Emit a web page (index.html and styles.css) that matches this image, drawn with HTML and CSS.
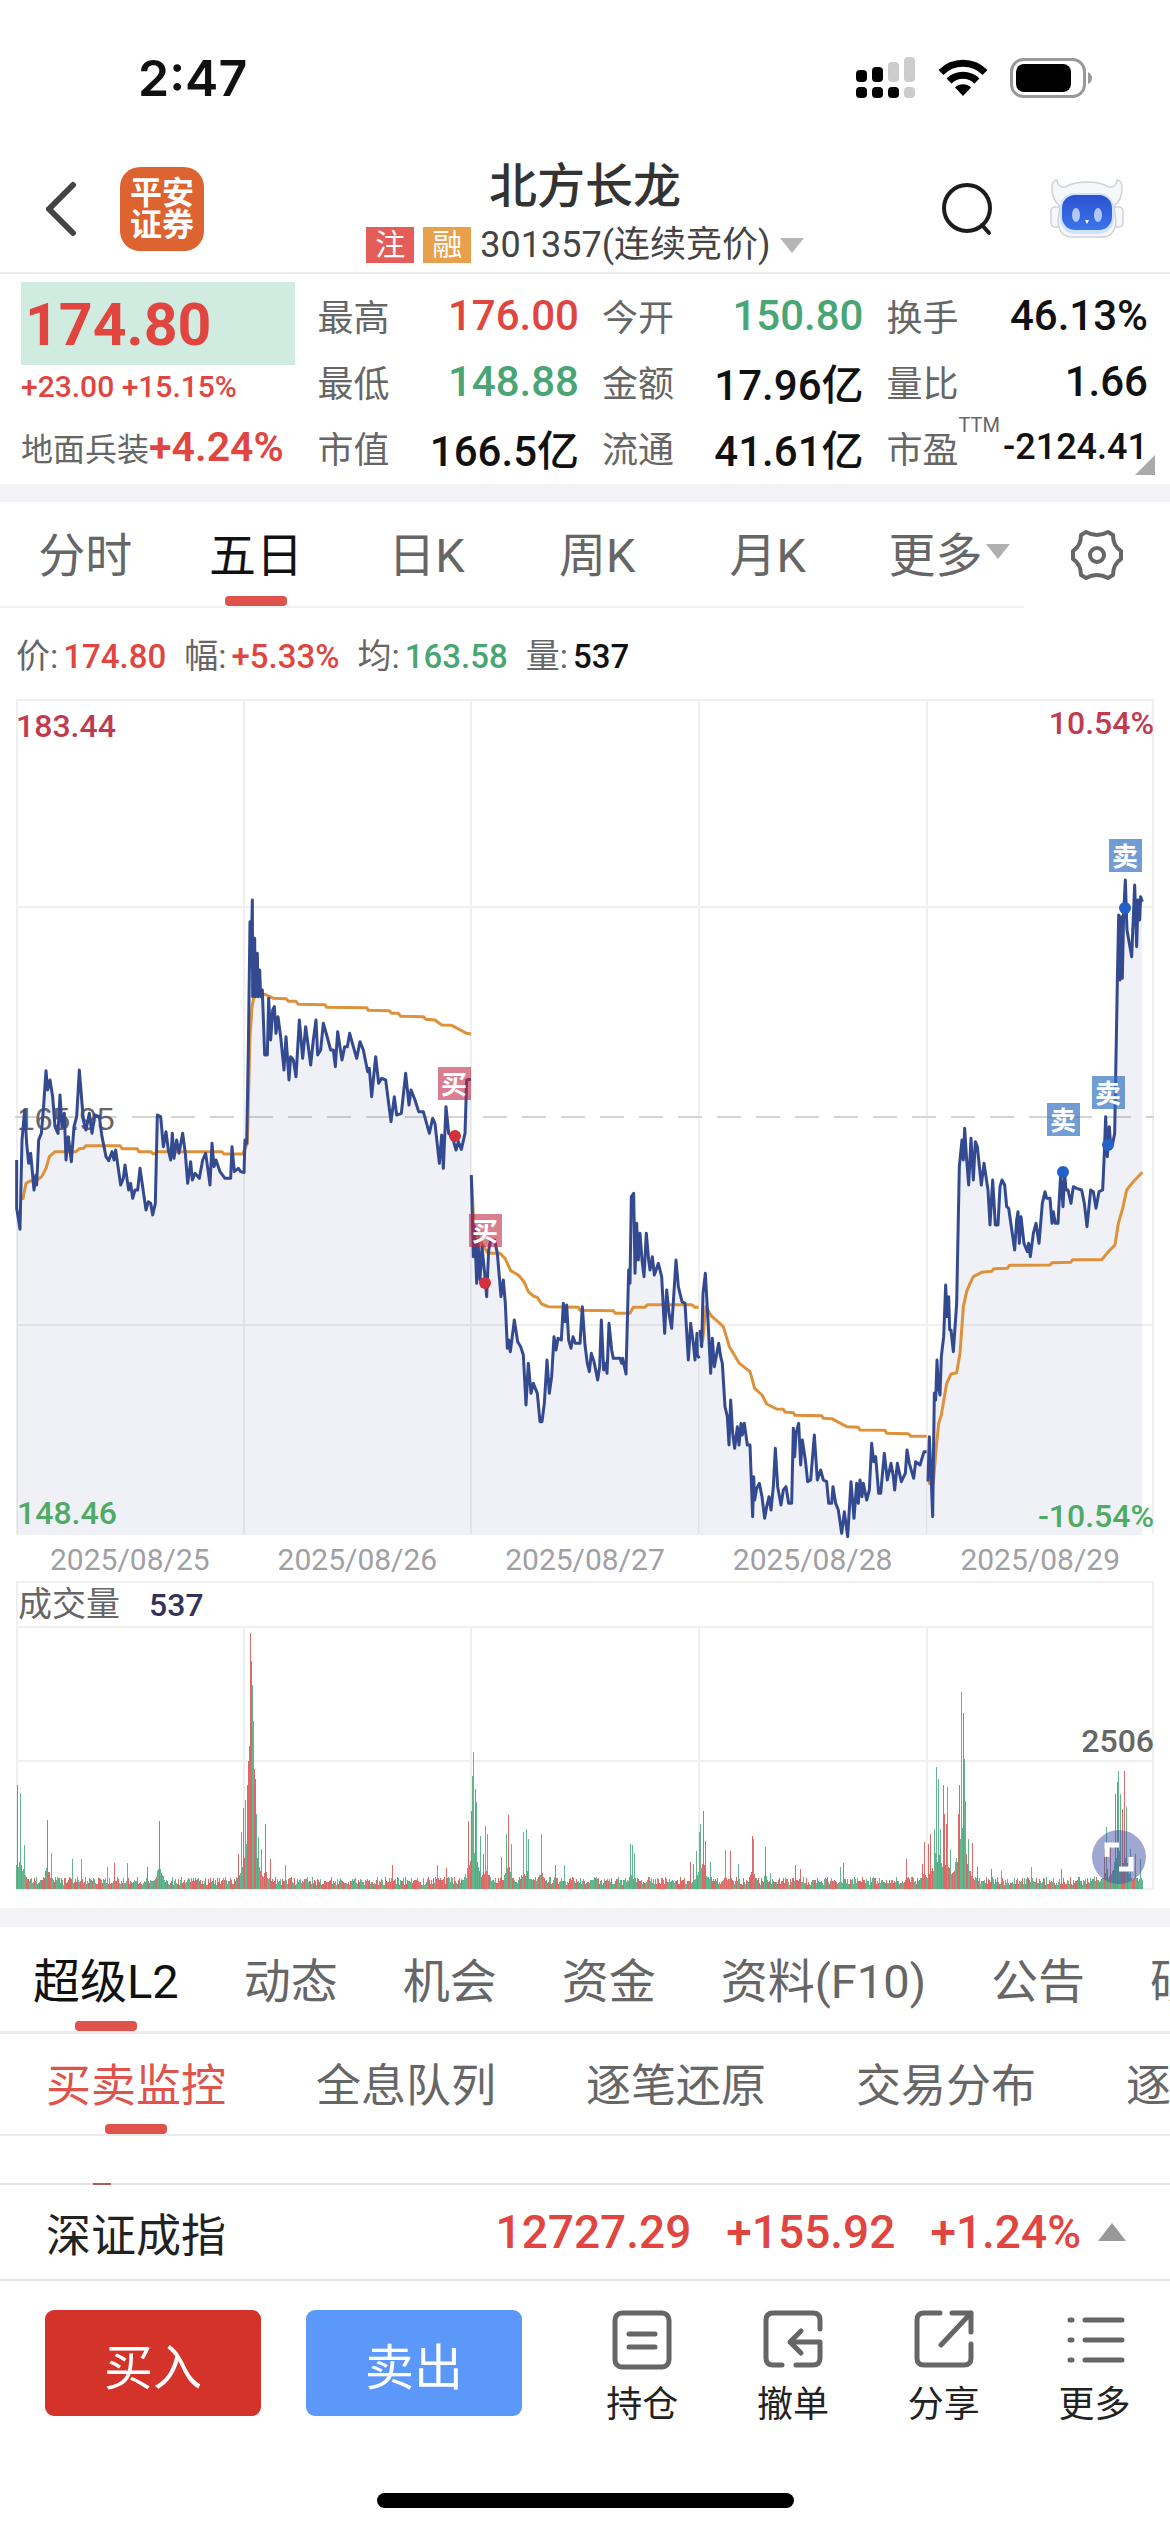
FILE: index.html
```html
<!DOCTYPE html>
<html lang="zh-CN">

<head>
  <meta charset="UTF-8">
  <meta name="viewport" content="width=device-width, initial-scale=1.0">
  <title>北方长龙 301357</title>
  <link rel="stylesheet" href="styles.css">
</head>

<body>
  <div class="status-bar">
    <span class="time">2:47</span>
    <div class="status-icons">
      <svg width="60" height="44" viewBox="0 0 60 44">
        <g fill="#000">
          <rect x="0" y="14" width="11" height="12" rx="4" />
          <rect x="16" y="11" width="11" height="15" rx="4" />
          <rect x="0" y="31" width="11" height="11" rx="4" />
          <rect x="16" y="31" width="11" height="11" rx="4" />
          <rect x="32" y="31" width="11" height="11" rx="4" />
        </g>
        <g fill="#ccc">
          <rect x="32" y="6" width="11" height="20" rx="4" />
          <rect x="48" y="1" width="11" height="25" rx="4" />
          <rect x="48" y="31" width="11" height="11" rx="4" />
        </g>
      </svg>
      <svg width="50" height="38" viewBox="0 0 50 38">
        <g fill="none" stroke="#000" stroke-width="7">
          <path d="M3 13.500 A31 31 0 0 1 47 13.500" />
          <path d="M11 22 A20 20 0 0 1 39 22" />
        </g>
        <path d="M17 28.500 A11.500 11.500 0 0 1 33 28.500 L25 37Z" fill="#000" />
      </svg>
      <svg width="82" height="40" viewBox="0 0 82 40">
        <rect x="1.500" y="1.500" width="73" height="37" rx="12" fill="none" stroke="#999" stroke-width="3" />
        <rect x="6" y="6" width="55" height="28" rx="8" fill="#000" />
        <path d="M78 14 Q82 16 82 20 Q82 24 78 26Z" fill="#999" />
      </svg>
    </div>
  </div>

  <header class="header">
    <div class="header-side">
      <button class="icon-button" aria-label="返回">
        <svg width="34" height="56" viewBox="0 0 34 56">
          <path d="M27 4 L3 28 L27 52" fill="none" stroke="#444" stroke-width="6" stroke-linecap="round" stroke-linejoin="round" />
        </svg>
      </button>
      <div class="logo">平安<br>证券</div>
    </div>
    <div class="title">
      <h1>北方长龙</h1>
      <div class="subtitle">
        <span class="tag">注</span>
        <span class="tag tag-orange">融</span>
        <span class="code">301357(连续竞价)</span>
        <svg width="24" height="15" viewBox="0 0 24 15"><path d="M0 0H24L12 15Z" fill="#b5b5b5" /></svg>
      </div>
    </div>
    <div class="header-side header-right">
      <button class="icon-button" aria-label="搜索">
        <svg width="54" height="56" viewBox="0 0 54 56">
          <circle cx="27" cy="27" r="23" fill="none" stroke="#1c1c1c" stroke-width="4" />
          <path d="M42 44 L49 52" stroke="#1c1c1c" stroke-width="4" stroke-linecap="round" />
        </svg>
      </button>
      <button class="icon-button" aria-label="智能助手">
        <svg width="74" height="60" viewBox="0 0 74 60">
          <defs>
            <linearGradient id="face" x1="0" y1="0" x2="0" y2="1">
              <stop offset="0" stop-color="#2b52cf" />
              <stop offset="1" stop-color="#3b74ec" />
            </linearGradient>
          </defs>
          <g fill="#f6f7f9" stroke="#cfd2d9" stroke-width="1.500">
            <rect x="1" y="28" width="12" height="20" rx="4" />
            <rect x="61" y="28" width="12" height="20" rx="4" />
            <path d="M10 27 Q1 20 2 7 Q3 1 7 1 Q8 9 15 8 Q24 3 37 3 Q50 3 59 8 Q66 9 67 1 Q71 1 72 7 Q73 20 64 27 L66 42 Q65 58 52 58 H22 Q9 58 8 42Z" />
          </g>
          <rect x="10" y="14" width="54" height="41" rx="15" fill="#cfe4fb" />
          <rect x="12" y="16" width="50" height="35" rx="13" fill="url(#face)" />
          <ellipse cx="26" cy="36" rx="4" ry="7" fill="#b0c9fa" />
          <ellipse cx="48" cy="36" rx="4" ry="7" fill="#b0c9fa" />
          <path d="M35 41H39L37 45Z" fill="#fff" />
        </svg>
      </button>
    </div>
  </header>

  <section class="quote">
    <div class="quote-main">
      <div class="last-price">174.80</div>
      <div class="change">+23.00 +15.15%</div>
      <div class="sector">地面兵装<b>+4.24%</b></div>
    </div>
    <dl class="quote-col">
      <div><dt>最高</dt><dd class="up">176.00</dd></div>
      <div><dt>最低</dt><dd class="down">148.88</dd></div>
      <div><dt>市值</dt><dd>166.5亿</dd></div>
    </dl>
    <dl class="quote-col">
      <div><dt>今开</dt><dd class="down">150.80</dd></div>
      <div><dt>金额</dt><dd>17.96亿</dd></div>
      <div><dt>流通</dt><dd>41.61亿</dd></div>
    </dl>
    <dl class="quote-col">
      <div><dt>换手</dt><dd>46.13%</dd></div>
      <div><dt>量比</dt><dd>1.66</dd></div>
      <div><dt>市盈<span class="ttm">TTM</span></dt><dd class="small">-2124.41</dd></div>
    </dl>
    <span class="corner"></span>
  </section>

  <nav class="period-bar">
    <div class="periods">
      <button>分时</button>
      <button class="active">五日</button>
      <button>日K</button>
      <button>周K</button>
      <button>月K</button>
      <button class="more">更多<svg width="24" height="15" viewBox="0 0 24 15"><path d="M0 0H24L12 15Z" fill="#b0b0b0" /></svg></button>
    </div>
    <button class="gear" aria-label="设置">
      <svg width="54" height="52" viewBox="-27 -26 54 52">
        <g fill="none" stroke="#666" stroke-width="4" stroke-linejoin="round">
          <path d="M-16 -20 L-11 -23 Q0 -17 11 -23 L16 -20 Q16 -9 24 -4 L24 4 Q16 9 16 20 L11 23 Q0 17 -11 23 L-16 20 Q-16 9 -24 4 L-24 -4 Q-16 -9 -16 -20Z" />
          <circle r="7" />
        </g>
      </svg>
    </button>
  </nav>

  <div class="readout">
    <span>价:<b class="up">174.80</b></span>
    <span>幅:<b class="up">+5.33%</b></span>
    <span>均:<b class="down">163.58</b></span>
    <span>量:<b>537</b></span>
  </div>

  <main class="charts">
    <svg class="price-chart" viewBox="0 0 1138 836">
      <g class="grid">
        <path d="M0 1H1138M0 208H1138M0 626H1138M1 0V835M228 0V835M455 0V835M683 0V835M911 0V835M1137 0V835" />
      </g>
      <path class="middle" d="M-1 418H1138" />
      <text class="axis helv" x="1" y="431">165.95</text>
      <g id="priceLines"></g>
      <g class="marks">
        <rect class="buy" x="422" y="368" width="33" height="33" />
        <text x="438" y="395">买</text>
        <rect class="buy" x="453" y="515" width="33" height="33" />
        <text x="469" y="542">买</text>
        <rect class="sell" x="1093" y="140" width="33" height="33" />
        <text x="1109" y="167">卖</text>
        <rect class="sell" x="1076" y="377" width="33" height="33" />
        <text x="1092" y="404">卖</text>
        <rect class="sell" x="1031" y="404" width="33" height="33" />
        <text x="1047" y="431">卖</text>
        <circle class="buy-dot" cx="439" cy="437" r="6" />
        <circle class="buy-dot" cx="469" cy="584" r="6" />
        <circle class="sell-dot" cx="1109" cy="209" r="6" />
        <circle class="sell-dot" cx="1092" cy="446" r="6" />
        <circle class="sell-dot" cx="1047" cy="473" r="6" />
      </g>
      <text class="axis high" x="0" y="38">183.44</text>
      <text class="axis high end" x="1138" y="35">10.54%</text>
      <text class="axis low" x="1" y="825">148.46</text>
      <text class="axis low end" x="1138" y="828">-10.54%</text>
    </svg>

    <div class="dates">
      <span>2025/08/25</span>
      <span>2025/08/26</span>
      <span>2025/08/27</span>
      <span>2025/08/28</span>
      <span>2025/08/29</span>
    </div>

    <div class="volume">
      <div class="volume-title">成交量<b>537</b></div>
      <svg class="volume-chart" viewBox="0 0 1138 264">
        <g class="grid">
          <path d="M0 1H1138M0 135H1138M0 263H1138M1 0V264M228 0V264M455 0V264M683 0V264M911 0V264M1137 0V264" />
        </g>
        <g id="volumeBars" shape-rendering="crispEdges"></g>
        <text class="axis end" x="1138" y="126">2506</text>
      </svg>
      <button class="expand" aria-label="全屏">
        <svg width="34" height="34" viewBox="0 0 34 34">
          <path d="M5 17V5H17M29 17V29H17" fill="none" stroke="#fff" stroke-width="5" />
        </svg>
      </button>
    </div>
  </main>

  <nav class="info-tabs">
    <button class="active">超级L2</button>
    <button>动态</button>
    <button>机会</button>
    <button>资金</button>
    <button>资料(F10)</button>
    <button>公告</button>
    <button>研报</button>
  </nav>
  <nav class="sub-tabs">
    <button class="active">买卖监控</button>
    <button>全息队列</button>
    <button>逐笔还原</button>
    <button>交易分布</button>
    <button>逐笔</button>
  </nav>
  <div class="monitor"></div>

  <div class="index-bar">
    <span class="index-name">深证成指</span>
    <span>12727.29</span>
    <span>+155.92</span>
    <span>+1.24%</span>
    <svg width="28" height="18" viewBox="0 0 28 18"><path d="M0 18H28L14 0Z" fill="#999" /></svg>
  </div>

  <footer class="actions">
    <button class="trade buy-button">买入</button>
    <button class="trade sell-button">卖出</button>
    <div class="tools">
      <button>
        <svg width="60" height="60" viewBox="0 0 60 60">
          <rect x="3" y="3" width="54" height="54" rx="7" />
          <path d="M17 24H43M17 37H43" />
        </svg>
        持仓
      </button>
      <button>
        <svg width="60" height="60" viewBox="0 0 60 60">
          <path d="M57 19V10Q57 3 50 3H10Q3 3 3 10V48Q3 55 10 55H19M33 55H50Q57 55 57 48V32H27M38 21L27 32L38 43" />
        </svg>
        撤单
      </button>
      <button>
        <svg width="60" height="60" viewBox="0 0 60 60">
          <path d="M26 3H10Q3 3 3 10V48Q3 55 10 55H50Q57 55 57 48V34M38 3H57V22M57 3L27 35" />
        </svg>
        分享
      </button>
      <button>
        <svg width="60" height="60" viewBox="0 0 60 60">
          <path d="M5 10H7M20 10H57M5 30H7M20 30H57M5 50H7M20 50H57" />
        </svg>
        更多
      </button>
    </div>
  </footer>
  <div class="home-indicator"></div>

  <script src="chart.js"></script>
</body>

</html>
```
FILE: styles.css
```css
* {
  box-sizing: border-box;
}

body {
  margin: 0;
  background-color: #fff;
  color: #111;
  font-family: Roboto, "Noto Sans CJK SC", sans-serif;
  overflow-x: hidden;
}

button {
  padding: 0;
  border: none;
  background: none;
  color: inherit;
  font: inherit;
  cursor: pointer;
}

svg {
  display: block;
  flex-shrink: 0;
}

.up {
  color: #e0453f;
}

.down {
  color: #4aa574;
}

/* Status bar */
.status-bar {
  display: flex;
  justify-content: space-between;
  align-items: center;
  height: 156px;
  padding: 0 78px 0 138px;
}

.time {
  font-family: Inter, sans-serif;
  font-size: 50px;
  font-weight: 600;
}

.status-icons {
  display: flex;
  align-items: center;
  gap: 22px;
}

/* Header */
.header {
  display: grid;
  grid-template-columns: 1fr auto 1fr;
  align-items: center;
  height: 118px;
  padding: 0 46px;
  border-bottom: 2px solid #ececec;
}

.header-side {
  display: flex;
  align-items: center;
  gap: 40px;
  height: 100%;
  padding-bottom: 14px;
}

.header-right {
  justify-content: flex-end;
  gap: 56px;
}

.logo {
  display: flex;
  align-items: center;
  width: 84px;
  height: 84px;
  padding: 0 10px;
  border-radius: 20px;
  background-color: #dd6331;
  color: #fff;
  font-size: 32px;
  font-weight: 700;
  line-height: 32px;
}

.title {
  display: flex;
  flex-direction: column;
  align-items: center;
  padding-bottom: 4px;
}

.title h1 {
  margin: 0;
  color: #333;
  font-size: 48px;
  font-weight: 500;
  line-height: 62px;
}

.subtitle {
  display: flex;
  align-items: center;
  gap: 9px;
}

.tag {
  width: 48px;
  height: 36px;
  background-color: #e55d58;
  color: #fff;
  font-size: 30px;
  line-height: 36px;
  text-align: center;
}

.tag-orange {
  background-color: #e8a04a;
}

.code {
  color: #444;
  font-size: 36px;
  line-height: 54px;
}

/* Quote */
.quote {
  position: relative;
  display: grid;
  grid-template-columns: 273fr 261fr 261fr 261fr;
  column-gap: 23px;
  height: 228px;
  padding: 8px 22px 10px 21px;
  border-bottom: 18px solid #f2f2f7;
}

.last-price {
  height: 83px;
  padding-left: 4px;
  background-color: #d0ece0;
  color: #e0453f;
  font-size: 59px;
  font-weight: 700;
  line-height: 86px;
}

.change {
  color: #e0453f;
  font-size: 30px;
  font-weight: 500;
  line-height: 44px;
  white-space: nowrap;
}

.sector {
  color: #666;
  font-size: 32px;
  line-height: 76px;
  white-space: nowrap;
}

.sector b {
  color: #e0453f;
  font-size: 41px;
  font-weight: 600;
}

.quote-col {
  display: flex;
  flex-direction: column;
  margin: 0;
}

.quote-col div {
  display: flex;
  justify-content: space-between;
  align-items: center;
  height: 66px;
}

.quote-col dt {
  position: relative;
  color: #666;
  font-size: 36px;
}

.quote-col dd {
  margin: 0;
  font-size: 42px;
  font-weight: 500;
}

.quote-col .small {
  font-size: 36px;
}

.ttm {
  position: absolute;
  left: 100%;
  top: -8px;
  font-size: 20px;
}

.corner {
  position: absolute;
  right: 15px;
  bottom: 9px;
  border-left: 20px solid transparent;
  border-bottom: 20px solid #aaa;
}

/* Period tabs */
.period-bar {
  display: flex;
  height: 106px;
  color: #666;
}

.periods {
  flex: 7;
  display: grid;
  grid-template-columns: repeat(6, 1fr);
  border-bottom: 2px solid #f0f0f0;
  font-size: 47px;
}

.periods button {
  position: relative;
  display: flex;
  justify-content: center;
  align-items: center;
  gap: 4px;
  padding-bottom: 6px;
  white-space: nowrap;
}

.periods .more {
  padding-left: 22px;
}

.gear {
  flex: 1;
  display: flex;
  justify-content: center;
  align-items: center;
}

.active {
  position: relative;
  color: #111;
}

.active::after {
  content: "";
  position: absolute;
  left: 50%;
  bottom: 0;
  width: 62px;
  height: 10px;
  margin-left: -31px;
  border-radius: 4px;
  background-color: #e0524c;
}

.readout {
  display: flex;
  align-items: center;
  gap: 18px;
  height: 91px;
  padding: 0 16px;
  color: #666;
  font-size: 34px;
}

.readout b {
  margin-left: 5px;
  font-size: 33px;
  font-weight: 500;
}

.readout b:not([class]) {
  color: #111;
}

/* Charts */
.charts {
  padding: 0 16px;
}

.price-chart,
.volume-chart {
  width: 100%;
  overflow: visible;
}

.grid {
  fill: none;
  stroke: #efefef;
  stroke-width: 2;
}

.middle {
  stroke: #d4d4d4;
  stroke-width: 2;
  stroke-dasharray: 24 15;
}

.area {
  fill: #33508f;
  fill-opacity: 0.08;
}

.average,
.price {
  fill: none;
  stroke: #de9139;
  stroke-width: 3;
  stroke-linejoin: round;
}

.price {
  stroke: #344a90;
}

.axis {
  fill: #666;
  font-size: 32px;
  font-weight: 500;
}

.helv {
  font-family: "Liberation Sans", sans-serif;
  font-weight: 400;
}

.high {
  fill: #c23a50;
}

.low {
  fill: #4dab63;
}

.end {
  text-anchor: end;
}

.marks text {
  fill: #fff;
  font-size: 26px;
  font-weight: 700;
  text-anchor: middle;
}

.buy {
  fill: #be2340;
  fill-opacity: 0.58;
}

.sell {
  fill: #2f6fc0;
  fill-opacity: 0.68;
}

.buy-dot {
  fill: #d2303a;
}

.sell-dot {
  fill: #2262c8;
}

.dates {
  display: grid;
  grid-template-columns: repeat(5, 1fr);
  height: 46px;
  color: #a0a0a4;
  font-size: 30px;
  line-height: 50px;
  text-align: center;
}

.volume {
  position: relative;
  padding-bottom: 18px;
}

.volume-title {
  height: 45px;
  border: 2px solid #efefef;
  border-bottom: none;
  color: #666;
  font-size: 34px;
  line-height: 42px;
}

.volume-title b {
  margin-left: 29px;
  color: #33335a;
  font-size: 32px;
  font-weight: 500;
}

.expand {
  position: absolute;
  right: 8px;
  bottom: 24px;
  display: flex;
  justify-content: center;
  align-items: center;
  width: 54px;
  height: 54px;
  border-radius: 50%;
  background-color: rgba(66, 82, 165, 0.5);
}

/* Info tabs */
.info-tabs,
.sub-tabs {
  display: flex;
  overflow: hidden;
  color: #666;
  white-space: nowrap;
}

.info-tabs button,
.sub-tabs button {
  flex-shrink: 0;
  padding-bottom: 3px;
}

.info-tabs {
  gap: 65px;
  height: 126px;
  padding-left: 33px;
  border-top: 19px solid #f2f2f7;
  border-bottom: 3px solid #ebebeb;
  font-size: 47px;
}

.sub-tabs {
  gap: 90px;
  height: 102px;
  padding-left: 46px;
  border-bottom: 2px solid #ebebeb;
  font-size: 45px;
}

.sub-tabs .active {
  color: #e0524c;
}

/* Top of the next list, cut off by the index bar */
.monitor {
  height: 49px;
  padding-left: 93px;
  border-bottom: 2px solid #e2e2e2;
}

.monitor::before {
  content: "";
  display: block;
  width: 18px;
  height: 47px;
  border-bottom: 2px solid #a9605c;
}

/* Index bar */
.index-bar {
  display: flex;
  align-items: center;
  gap: 35px;
  height: 96px;
  padding: 0 44px 0 46px;
  border-bottom: 2px solid #e6e6e6;
  color: #e0453f;
  font-size: 46px;
  font-weight: 500;
}

.index-name {
  margin-right: auto;
  color: #222;
  font-size: 45px;
  font-weight: 400;
}

.index-bar svg {
  margin-left: -18px;
}

/* Bottom actions */
.actions {
  display: flex;
  align-items: flex-start;
  gap: 45px;
  padding: 29px 0 0 45px;
}

.trade {
  width: 216px;
  height: 106px;
  border-radius: 9px;
  color: #fff;
  font-size: 49px;
}

.buy-button {
  background-color: #d43329;
}

.sell-button {
  background-color: #5c98f9;
}

.tools {
  flex: 1;
  display: grid;
  grid-template-columns: repeat(4, 1fr);
  color: #222;
  font-size: 36px;
}

.tools button {
  display: flex;
  flex-direction: column;
  align-items: center;
  gap: 10px;
  line-height: 50px;
}

.tools svg {
  fill: none;
  stroke: #666;
  stroke-width: 5;
  stroke-linecap: round;
  stroke-linejoin: round;
}

.home-indicator {
  width: 417px;
  height: 15px;
  margin: 63px auto 24px;
  border-radius: 8px;
  background-color: #000;
}
```
FILE: chart.js
```js
const CHART_BOTTOM = 836;
const SVG_NS = 'http://www.w3.org/2000/svg';

// Each trace: offset in the chart, then x,y pairs in thirds of a unit
const priceTraces = [
  [-16, 151, '50,930 50,1075 60,1138 66,870 74,780 80,880 86,940 92,910 102,1020 108,975 110,1005 116,870 124,850 130,780 138,662 143,720 150,690 158,740 165,830 174,850 180,735 186,830 193,790 198,930 205,860 214,935 222,830 230,800 238,660 246,760 250,810 258,840 268,790 276,850 284,795 298,800 306,860 318,920 326,932 336,905 342,930 347,900 352,935 362,1005 370,985 375,945 386,1020 392,1000 398,1045 405,1020 413,1020 420,955 428,1010 438,1080 445,1055 452,1060 458,1095 466,1060 472,795 482,800 490,890 498,845 505,900 512,930 517,850 522,925 530,870 537,910 548,850 556,910 563,1000 572,935 577,990 585,970 598,985 608,930 617,910 624,960 630,1005 636,880 642,950 648,930 660,965 675,985 692,985 696,890 703,965 715,955 722,965 732,968 735,870 740,880 745,600 750,215 753,350 757,150 758,440 764,265 766,440 772,310 774,440 779,360 782,440 787,420 794,615 802,615 806,445 812,570 818,480 823,470 828,550 834,500 842,560 852,660 858,560 867,690 872,620 880,630 888,680 898,510 908,625 917,530 932,645 940,570 948,510 953,615 962,600 970,520 980,555 992,600 1000,600 1006,650 1013,545 1026,630 1034,590 1042,590 1049,550 1060,590 1070,625 1080,575 1090,600 1103,665 1108,655 1115,740 1127,620 1136,700 1145,685 1157,690 1173,815 1183,740 1190,795 1204,790 1217,670 1227,765 1233,720 1245,750 1256,785 1270,785 1288,850 1298,805 1305,820 1318,940 1325,855 1330,955 1338,770 1346,850 1357,860 1368,900 1375,875 1384,898 1395,850 1400,690 1413,688'],
  [434, 341, '64,405 70,650 74,560 80,730 84,600 90,720 96,620 104,700 110,770 116,630 122,600 134,600 142,640 148,710 153,770 160,720 166,790 172,925 176,900 181,935 193,840 203,905 212,920 220,945 228,1095 235,970 243,1060 250,1030 262,1060 270,1145 276,1145 283,1090 291,960 298,1060 305,1010 312,890 318,930 324,895 334,900 340,790 345,845 350,795 356,900 363,925 369,890 376,910 390,910 397,800 405,915 412,970 418,995 424,940 432,965 443,1020 449,980 454,840 461,990 467,970 471,1000 477,850 485,930 490,955 510,955 515,970 518,955 528,1002 536,690 540,730 544,470 551,460 555,700 560,550 565,660 570,580 576,660 582,710 589,580 596,660 600,690 607,650 613,705 625,670 635,710 644,880 650,750 657,820 665,865 678,660 685,740 696,785 705,790 715,960 722,850 730,910 735,960 741,880 742,945 748,955'],
  [434, 341, '750,870 755,920 759,760 766,700 774,840 782,1000 787,895 793,980 806,910 812,950 817,970 825,1100 832,1130 837,1215 842,1080 848,1180 854,1225 862,1160 867,1215 873,1150 877,1185 883,1150 892,1215 900,1215 908,1430 911,1310 914,1380 920,1345 928,1330 936,1370 944,1435 950,1400 957,1370 963,1410 970,1340 976,1225 983,1340 993,1395 1000,1350 1008,1340 1016,1390 1025,1390 1030,1165 1034,1250 1038,1180 1046,1150 1052,1275 1057,1200 1066,1260 1073,1325 1082,1320 1093,1185 1102,1320 1112,1290 1120,1320 1130,1325 1136,1390 1145,1390 1149,1340 1157,1390 1165,1410 1175,1480 1183,1415 1193,1490 1203,1325 1212,1435 1220,1330 1225,1390 1230,1320 1236,1370 1240,1330 1250,1380 1258,1350 1265,1210 1271,1265 1277,1250 1286,1360 1292,1360 1303,1240 1312,1320 1323,1270 1330,1310 1334,1350 1342,1270 1354,1325 1366,1300 1371,1230 1378,1270 1391,1315 1397,1265 1410,1275 1422,1235 1430,1235'],
  [434, 341, '1434,1325 1438,1190 1443,1300 1448,1430 1453,1060 1457,1080 1461,960 1465,1040 1470,1065 1474,950 1481,890 1487,735 1491,830 1496,770 1499,870 1503,870 1510,935 1520,790 1528,380 1536,300 1540,360 1544,265 1550,360 1556,435 1563,295 1570,420 1576,305 1582,320 1594,435 1602,370 1614,450 1620,555 1628,420 1636,555 1644,555 1650,440 1656,420 1664,435 1670,500 1676,505 1684,560 1694,630 1700,540 1704,515 1708,610 1713,530 1722,610 1732,635 1736,610 1741,650 1750,580 1758,550 1767,610 1777,490 1785,455 1790,475 1800,475 1806,550 1810,515 1816,550 1824,550 1832,400 1839,500 1844,400 1848,450 1854,450 1863,490 1870,440 1880,445 1895,450 1903,490 1911,560 1922,450 1930,455 1938,505 1947,455 1958,450 1963,340 1967,230 1972,350 1978,260 1982,315 1988,310 1994,280 2002,-175 2006,-375 2010,-180 2014,-370 2017,-185 2021,-380 2026,-480 2031,-330 2045,-250 2054,-465 2060,-280 2064,-420 2069,-360 2072,-430 2077,-415']
];

const averageTraces = [
  [-16, 151, '68,1050 78,1000 90,993 108,993 125,980 138,955 148,920 165,905 228,905 238,896 250,895 258,887 360,887 366,896 412,896 416,905 452,905 460,912 475,905 666,905 672,912 728,912 742,880 750,560 756,470 762,442 785,430 800,435 820,445 858,446 866,454 888,454 895,463 975,464 980,472 1100,473 1105,481 1168,482 1175,490 1195,490 1202,499 1270,500 1278,508 1305,510 1325,525 1355,526 1370,534 1400,550 1413,552'],
  [434, 341, '64,410 72,560 95,610 112,637 125,640 150,640 165,655 182,692 205,705 222,725 235,755 250,768 262,772 275,792 295,800 385,802 390,811 490,812 496,820 540,820 550,802 585,802 592,794 725,794 735,802 746,802'],
  [434, 341, '752,920 758,900 768,800 784,828 800,842 820,860 838,920 868,970 900,995 914,1045 936,1065 950,1092 980,1107 1000,1108 1005,1116 1030,1118 1035,1126 1115,1127 1120,1135 1145,1136 1190,1160 1225,1162 1230,1170 1305,1171 1310,1180 1375,1181 1382,1189 1430,1189'],
  [434, 341, '1434,1330 1450,1330 1458,1230 1466,1150 1474,1125 1490,1030 1503,1002 1520,998 1530,940 1540,800 1550,755 1560,730 1570,710 1595,697 1625,694 1632,686 1672,685 1678,676 1800,675 1806,668 1862,667 1868,659 1955,659 1975,635 1995,615 2005,550 2018,505 2030,450 2050,425 2077,397']
];

function toPoints([left, top, text]) {
  return text.split(' ').map(pair => {
    const [x, y] = pair.split(',').map(Number);
    return [left + x / 3, top + y / 3];
  });
}

function addPath(parent, className, d) {
  const path = document.createElementNS(SVG_NS, 'path');
  path.setAttribute('class', className);
  path.setAttribute('d', d);
  parent.appendChild(path);
}

const priceLines = document.getElementById('priceLines');

priceTraces.map(toPoints).forEach(points => {
  const first = points[0][0];
  const last = points[points.length - 1][0];
  addPath(priceLines, 'area', `M${first} ${CHART_BOTTOM}L${points.join(' ')}L${last} ${CHART_BOTTOM}Z`);
});
averageTraces.map(toPoints).forEach(points => addPath(priceLines, 'average', 'M' + points.join('L')));
priceTraces.map(toPoints).forEach(points => addPath(priceLines, 'price', 'M' + points.join('L')));

// Volume peaks: x, height, colour (r = up, g = down)
const peaks = [
  [1, 104, 'r'], [4, 96, 'g'], [8, 44, 'g'], [31, 69, 'r'], [35, 36, 'g'], [56, 30, 'g'], [65, 30, 'g'],
  [91, 22, 'g'], [98, 26, 'r'], [111, 26, 'g'], [131, 22, 'r'], [143, 68, 'r'], [222, 35, 'r'], [225, 57, 'g'],
  [227, 81, 'r'], [229, 89, 'g'], [231, 104, 'r'], [232, 128, 'r'], [233, 143, 'r'], [234, 256, 'r'],
  [235, 228, 'r'], [236, 204, 'g'], [237, 168, 'g'], [238, 120, 'r'], [239, 110, 'r'], [240, 75, 'g'],
  [242, 52, 'g'], [245, 40, 'g'], [249, 65, 'r'], [254, 30, 'r'], [269, 24, 'g'], [376, 24, 'r'], [421, 24, 'g'],
  [430, 21, 'r'], [452, 68, 'r'], [455, 78, 'r'], [456, 113, 'g'], [457, 137, 'g'], [459, 100, 'r'], [460, 87, 'g'],
  [464, 53, 'g'], [467, 35, 'r'], [469, 63, 'g'], [471, 55, 'g'], [485, 32, 'r'], [490, 55, 'g'], [492, 74, 'r'],
  [495, 45, 'g'], [507, 57, 'g'], [510, 60, 'g'], [512, 50, 'g'], [525, 55, 'g'], [539, 24, 'r'], [548, 24, 'g'],
  [614, 45, 'g'], [616, 44, 'g'], [618, 36, 'g'], [674, 27, 'r'], [677, 25, 'r'], [680, 38, 'g'], [683, 57, 'g'],
  [684, 65, 'g'], [687, 78, 'r'], [689, 48, 'r'], [694, 27, 'g'], [709, 39, 'g'], [714, 38, 'r'], [722, 25, 'g'],
  [736, 53, 'r'], [737, 50, 'g'], [749, 42, 'r'], [754, 16, 'g'], [779, 24, 'r'], [784, 20, 'r'], [824, 22, 'g'],
  [827, 26, 'r'], [890, 30, 'r'], [906, 25, 'r'], [908, 47, 'r'], [912, 45, 'r'], [914, 55, 'r'], [918, 60, 'g'],
  [920, 122, 'g'], [922, 110, 'g'], [924, 60, 'g'], [927, 104, 'r'], [928, 75, 'r'], [930, 65, 'r'], [931, 102, 'g'],
  [934, 40, 'g'], [942, 75, 'r'], [943, 104, 'r'], [945, 197, 'g'], [947, 176, 'r'], [948, 130, 'g'], [949, 88, 'g'],
  [952, 50, 'g'], [956, 46, 'r'], [961, 22, 'r'], [975, 20, 'r'], [985, 18, 'g'], [1015, 22, 'g'], [1045, 20, 'r'],
  [1088, 40, 'r'], [1090, 62, 'g'], [1094, 45, 'r'], [1099, 95, 'r'], [1101, 107, 'r'], [1102, 118, 'g'],
  [1104, 95, 'g'], [1106, 80, 'r'], [1108, 118, 'r'], [1110, 82, 'g'], [1114, 40, 'g'], [1119, 35, 'g'], [1124, 30, 'g']
];

let seed = 7;
function random() {
  seed = (seed * 16807) % 2147483647;
  return seed / 2147483647;
}

const bars = { r: '', g: '' };
for (let x = 0; x < 1127; x++) {
  let height = 4 + random() * 8;
  let color = random() < 0.48 ? 'r' : 'g';
  peaks.forEach(([peakX, peakHeight, peakColor]) => {
    const distance = Math.abs(x - peakX);
    if (distance === 0) {
      height = peakHeight;
      color = peakColor;
    } else {
      const tail = peakHeight * 0.38 * Math.exp(-distance / 6) * (0.6 + random() * 0.4);
      height = Math.max(height, tail);
    }
  });
  bars[color] += `M${x} ${263 - Math.round(height)}h1V263h-1Z`;
}

const volumeBars = document.getElementById('volumeBars');
addPath(volumeBars, 'bar-up', bars.r);
addPath(volumeBars, 'bar-down', bars.g);
volumeBars.children[0].setAttribute('fill', '#da6a68');
volumeBars.children[1].setAttribute('fill', '#62b58c');
```
